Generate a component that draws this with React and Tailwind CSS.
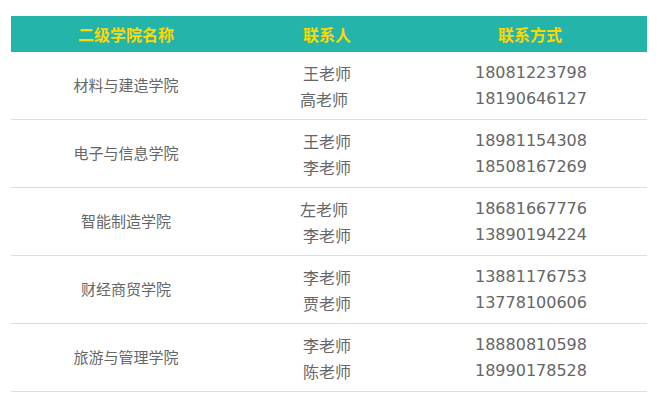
const rows = [
  { name: "材料与建造学院", people: [["王老师", "18081223798"], ["高老师", "18190646127", true]] },
  { name: "电子与信息学院", people: [["王老师", "18981154308"], ["李老师", "18508167269"]] },
  { name: "智能制造学院", people: [["左老师", "18681667776", true], ["李老师", "13890194224"]] },
  { name: "财经商贸学院", people: [["李老师", "13881176753"], ["贾老师", "13778100606"]] },
  { name: "旅游与管理学院", people: [["李老师", "18880810598"], ["陈老师", "18990178528"]] },
];

const cjk = { fontFamily: '"Microsoft YaHei", "Noto Sans CJK SC", sans-serif' };

export default function App() {
  return (
    <div className="bg-white w-[665px] h-[396px] pt-4 pl-[11px]" style={cjk}>
      <div className="w-[636px]">
        {/* 表头 */}
        <div className="grid grid-cols-[230px_172px_234px] h-9 items-center bg-[#23b5a9] text-[#ffd700] text-[16px] font-bold">
          <div className="text-center">二级学院名称</div>
          <div className="text-center">联系人</div>
          <div className="text-center">联系方式</div>
        </div>

        {rows.map((r) => (
          <div key={r.name} className="grid grid-cols-[230px_172px_234px] h-[68px] items-center border-b border-[#dddddd] text-[#666666]">
            <div className="text-center text-[15px]">{r.name}</div>
            <div className="flex flex-col items-center text-[16px] leading-[26px]">
              {r.people.map(([p, , shift]) => (
                <span key={p} className={shift ? "pr-[6px]" : ""}>{p}</span>
              ))}
            </div>
            <div className="flex flex-col items-center text-[16px] leading-[26px] pl-[2px]" style={{ fontFamily: '"DejaVu Sans", sans-serif' }}>
              {r.people.map(([, tel]) => (
                <span key={tel}>{tel}</span>
              ))}
            </div>
          </div>
        ))}
      </div>
    </div>
  );
}
